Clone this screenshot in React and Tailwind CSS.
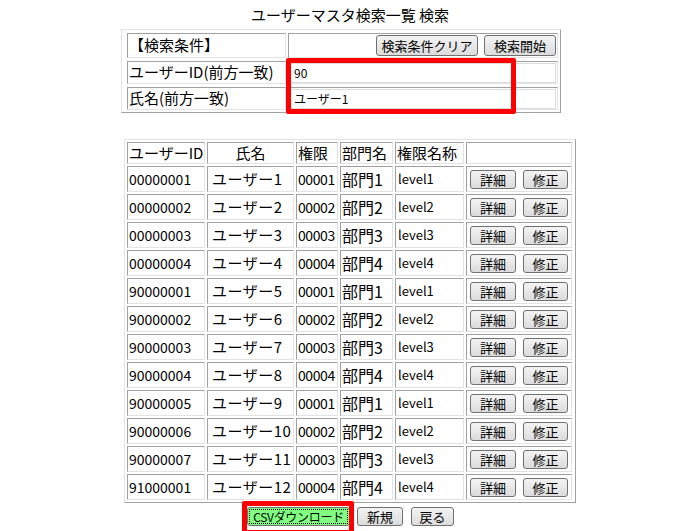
import React from "react";

const rows = [
  ["00000001", "ユーザー1", "00001", "部門1", "level1"],
  ["00000002", "ユーザー2", "00002", "部門2", "level2"],
  ["00000003", "ユーザー3", "00003", "部門3", "level3"],
  ["00000004", "ユーザー4", "00004", "部門4", "level4"],
  ["90000001", "ユーザー5", "00001", "部門1", "level1"],
  ["90000002", "ユーザー6", "00002", "部門2", "level2"],
  ["90000003", "ユーザー7", "00003", "部門3", "level3"],
  ["90000004", "ユーザー8", "00004", "部門4", "level4"],
  ["90000005", "ユーザー9", "00001", "部門1", "level1"],
  ["90000006", "ユーザー10", "00002", "部門2", "level2"],
  ["90000007", "ユーザー11", "00003", "部門3", "level3"],
  ["91000001", "ユーザー12", "00004", "部門4", "level4"],
];

const cell =
  "border border-t-[#a0a0a0] border-l-[#a0a0a0] border-b-[#e3e3e3] border-r-[#e3e3e3] flex items-center overflow-hidden whitespace-nowrap";

function Btn({ children, className = "" }) {
  return (
    <button
      className={
        "h-[19px] border border-[#707070] rounded-[3px] bg-gradient-to-b from-[#f4f4f4] to-[#dcdcdc] text-[13px] leading-none text-black flex items-center justify-center whitespace-nowrap " +
        className
      }
    >
      {children}
    </button>
  );
}

export default function App() {
  return (
    <div
      className="w-[700px] h-[531px] bg-white relative overflow-hidden text-black"
      style={{ fontFamily: '"Noto Sans CJK JP", "Noto Sans", sans-serif' }}
    >
      <div className="h-[29px] pt-[5px] text-center text-[15px] leading-[20px]">
        ユーザーマスタ検索一覧 検索
      </div>

      {/* search table */}
      <div className="ml-[121px] w-[440px] border border-t-[#e3e3e3] border-l-[#e3e3e3] border-b-[#a0a0a0] border-r-[#a0a0a0] pl-[5px] pr-[2px] pt-[3px] pb-[2px] grid grid-cols-[159px_270px] gap-x-[2px] gap-y-[3px] text-[15px]">
        <div className={cell + " h-[25px] pl-[1px]"}>【検索条件】</div>
        <div className={cell + " h-[25px] justify-end gap-[6px] pr-[1px]"}>
          <Btn className="w-[102px] h-[21px]">検索条件クリア</Btn>
          <Btn className="w-[72px] h-[21px]">検索開始</Btn>
        </div>
        <div className={cell + " h-[23px] pl-[1px]"}>ユーザーID(前方一致)</div>
        <div className={cell + " h-[23px] px-[1px]"}>
          <div className="w-full h-[20px] border border-[#dcdcdc] text-[12px] flex items-center pl-[3px]">
            90
          </div>
        </div>
        <div className={cell + " h-[23px] pl-[1px]"}>氏名(前方一致)</div>
        <div className={cell + " h-[23px] px-[1px]"}>
          <div className="w-full h-[20px] border border-[#dcdcdc] text-[12px] flex items-center pl-[3px]">
            ユーザー1
          </div>
        </div>
      </div>

      {/* results table */}
      <div className="mt-[26px] ml-[124px] w-[452px] border border-t-[#e3e3e3] border-l-[#e3e3e3] border-b-[#a0a0a0] border-r-[#a0a0a0] p-[2px] grid grid-cols-[78px_87px_42px_53px_69px_106px] gap-[2px] text-[15px]">
        <div className={cell + " h-[22px] pl-[1px]"}>ユーザーID</div>
        <div className={cell + " h-[22px] justify-center"}>氏名</div>
        <div className={cell + " h-[22px] pl-[1px]"}>権限</div>
        <div className={cell + " h-[22px] pl-[1px]"}>部門名</div>
        <div className={cell + " h-[22px] pl-[1px]"}>権限名称</div>
        <div className={cell + " h-[22px]"}></div>
        {rows.map((r, i) => (
          <React.Fragment key={i}>
            <div className={cell + " h-[26px] pl-[1px] text-[14px]"}>{r[0]}</div>
            <div className={cell + " h-[26px] pl-[4px] tracking-[0.5px]"}>{r[1]}</div>
            <div className={cell + " h-[26px] pl-[1px] text-[14px] tracking-[-0.4px]"}>{r[2]}</div>
            <div className={cell + " h-[26px] pl-[1px] text-[16px]"}>{r[3]}</div>
            <div className={cell + " h-[26px] pl-[2px] text-[13px]"}>{r[4]}</div>
            <div className={cell + " h-[26px] pl-[3px] gap-[7px]"}>
              <Btn className="w-[46px]">詳細</Btn>
              <Btn className="w-[45px]">修正</Btn>
            </div>
          </React.Fragment>
        ))}
      </div>

      {/* bottom buttons */}
      <div className="mt-[4px] ml-[247px] flex items-center gap-[7px]">
        <button className="w-[103px] h-[19px] border border-[#707070] rounded-[3px] bg-[#80ff80] text-[12px] tracking-[-0.3px] leading-none whitespace-nowrap flex items-center justify-center outline outline-1 outline-dotted outline-black -outline-offset-[3px]">
          CSVダウンロード
        </button>
        <Btn className="w-[46px]">新規</Btn>
        <Btn className="w-[43px] ml-[1px]">戻る</Btn>
      </div>

      {/* red highlight boxes */}
      <div className="absolute left-[286px] top-[58px] w-[230px] h-[56px] border-[5px] border-[#ff0000] rounded-[2px]" />
      <div className="absolute left-[242px] top-[501px] w-[112px] h-[34px] border-[5px] border-[#ff0000] rounded-[2px]" />
    </div>
  );
}
